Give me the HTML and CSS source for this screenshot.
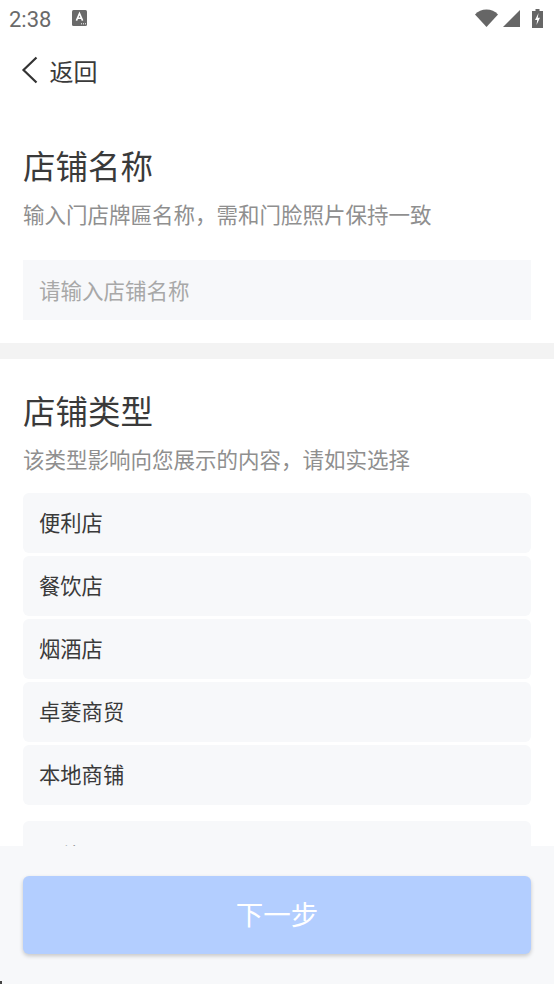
FILE: index.html
```html
<!DOCTYPE html>
<html lang="zh-CN">
<head>
    <meta charset="UTF-8">
    <meta name="viewport" content="width=device-width, initial-scale=1.0">
    <title>店铺信息</title>
    <link rel="stylesheet" href="styles.css">
</head>
<body>

<div class="page">
    <div class="status-bar">
        <div class="status-left">
            <span class="time">2:38</span>
            <svg class="status-a" width="15" height="16" viewBox="0 0 15 16">
                <rect width="15" height="16" rx="1.5" fill="#6a6a6a"/>
                <path d="M4.4 10.600 7.500 3.400 10.600 10.600M5.600 8.200H9.400" fill="none" stroke="#fff" stroke-width="1.600"/>
                <path d="M9 13.800h1M11 13.800h1M13 13.800h1" stroke="#fff" stroke-width="1"/>
            </svg>
        </div>
        <div class="status-right">
            <svg width="23" height="18" viewBox="0 0 23 18"><path d="M0 5.500C3 2.300 7 0.500 11.500 0.500S20 2.300 23 5.500L11.500 18Z" fill="#666"/></svg>
            <svg class="signal" width="17" height="17" viewBox="0 0 17 17"><path d="M0 17 17 0V17Z" fill="#666"/></svg>
            <svg class="battery" width="11" height="19" viewBox="0 0 11 19">
                <path d="M3.500 0H7.500V2H11V19H0V2H3.500Z" fill="#666"/>
                <path d="M6.500 4 3 11H5.200L4.500 16 8 8.800H5.800Z" fill="#fff"/>
            </svg>
        </div>
    </div>

    <div class="nav">
        <svg width="18" height="28" viewBox="0 0 18 28"><path d="M15.500 1.500 2.500 14 15.500 26.500" fill="none" stroke="#333" stroke-width="2.200"/></svg>
        <span class="nav-label">返回</span>
    </div>

    <section class="name-section">
        <h2>店铺名称</h2>
        <p class="hint">输入门店牌匾名称，需和门脸照片保持一致</p>
        <input class="name-input" type="text" placeholder="请输入店铺名称">
    </section>

    <div class="divider"></div>

    <section class="type-section">
        <h2>店铺类型</h2>
        <p class="hint">该类型影响向您展示的内容，请如实选择</p>
        <ul class="type-list">
            <li>便利店</li>
            <li>餐饮店</li>
            <li>烟酒店</li>
            <li>卓菱商贸</li>
            <li>本地商铺</li>
            <li class="other">其他</li>
        </ul>
    </section>

    <div class="footer">
        <button class="btn-next" type="button">下一步</button>
        <span class="corner-speck"></span>
    </div>
</div>

</body>
</html>
```

FILE: styles.css
```css
* {
    box-sizing: border-box;
}
html, body {
    margin: 0;
    padding: 0;
}
body {
    font-family: "Noto Sans CJK SC", "Noto Sans", sans-serif;
    background-color: #fff;
    color: #3a3a3a;
}
.page {
    position: relative;
    width: 554px;
    height: 984px;
    overflow: hidden;
}
.status-bar {
    height: 36px;
    display: flex;
    justify-content: space-between;
    align-items: center;
    padding: 0 11px 0 9px;
}
.status-left {
    display: flex;
    align-items: center;
}
.time {
    font-family: Roboto, sans-serif;
    font-size: 22px;
    line-height: 26px;
    margin-top: 3px;
    color: #6a6a6a;
}
.status-a {
    margin-left: 21px;
}
.status-right {
    display: flex;
    align-items: center;
}
.signal {
    margin-left: 5px;
}
.battery {
    margin-left: 12px;
}
.nav {
    height: 68px;
    display: flex;
    align-items: center;
    padding-left: 21px;
}
.nav-label {
    font-size: 24px;
    margin-left: 10.500px;
    margin-top: 1px;
    line-height: 32px;
}
h2 {
    margin: 0;
    font-size: 32.500px;
    font-weight: 400;
    line-height: 44px;
    color: #3a3a3a;
}
.hint {
    margin: 11px 0 0;
    font-size: 21.500px;
    line-height: 32px;
    color: #8f8f8f;
}
.name-section {
    padding: 39px 23px 23px;
    height: 239px;
}
.name-input {
    display: block;
    width: 100%;
    height: 60px;
    margin-top: 30px;
    padding: 0 16px 2px;
    border: 0;
    outline: 0;
    background-color: #f7f8fa;
    font-family: inherit;
    font-size: 21.500px;
}
.name-input::placeholder {
    color: #a8a8a8;
    opacity: 1;
}
.divider {
    height: 16px;
    background-color: #f3f3f3;
}
.type-section {
    padding: 29px 23px 0;
}
.type-list {
    list-style: none;
    margin: 18px 0 0;
    padding: 0;
}
.type-list li {
    height: 60px;
    margin-bottom: 3px;
    padding-left: 16px;
    line-height: 58px;
    font-size: 21.300px;
    background-color: #f7f8fa;
    border-radius: 6px;
}
.type-list .other {
    margin-top: 16px;
    line-height: 68px;
}
.footer {
    position: absolute;
    left: 0;
    right: 0;
    bottom: 0;
    height: 138px;
    padding: 30px 23px 0;
    background-color: #f7f8fa;
}
.btn-next {
    display: block;
    width: 100%;
    height: 78px;
    padding: 0 0 4px;
    border: 0;
    border-radius: 6px;
    background-color: #b3ceff;
    color: #fff;
    font-family: inherit;
    font-size: 27.500px;
    box-shadow: 0 2px 4px rgba(0, 0, 0, 0.2);
}
.corner-speck {
    position: absolute;
    left: 0;
    bottom: 0;
    width: 2px;
    height: 3px;
    background-color: #444;
}
```
